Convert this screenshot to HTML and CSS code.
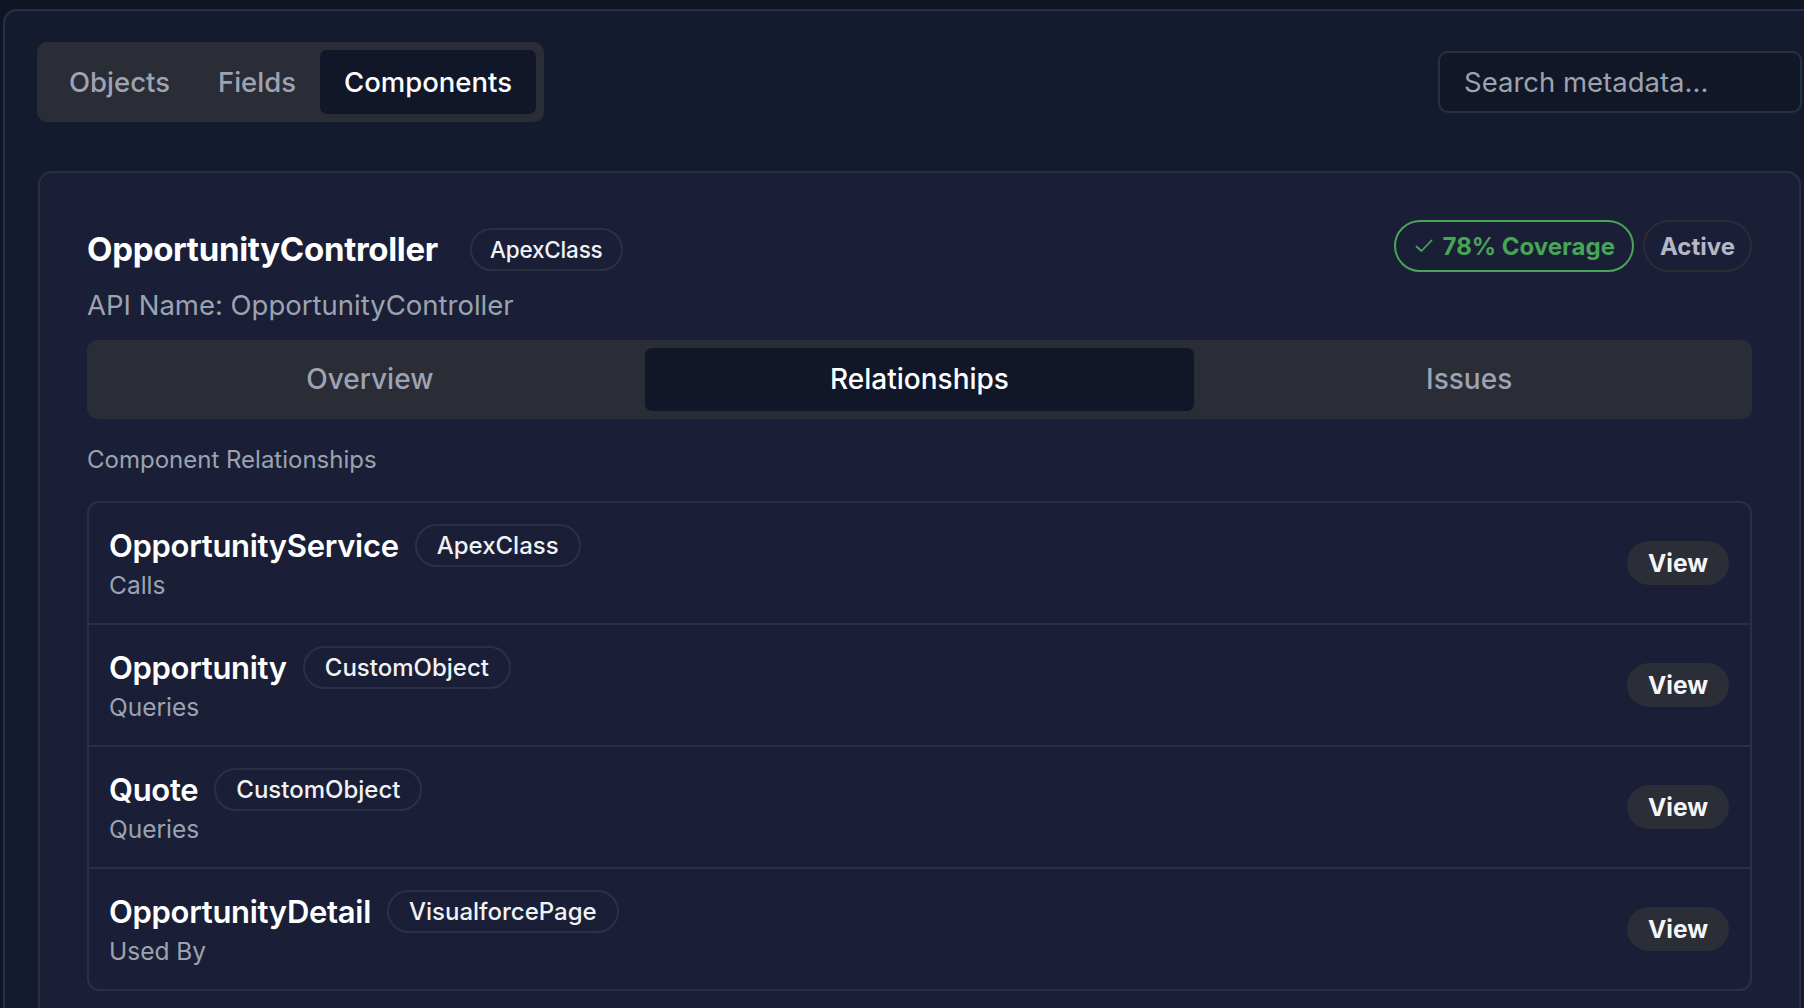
FILE: index.html
```html
<!DOCTYPE html>
<html lang="en">
<head>
<meta charset="utf-8">
<title>Metadata Explorer</title>
<link rel="stylesheet" href="styles.css">
</head>
<body>
<div class="frame">
  <div class="topbar">
    <nav class="seg">
      <div class="seg-tab">Objects</div>
      <div class="seg-tab">Fields</div>
      <div class="seg-tab is-active">Components</div>
    </nav>
    <input class="search" type="text" placeholder="Search metadata...">
  </div>

  <section class="card">
    <div class="head">
      <div class="head-left">
        <div class="title-row">
          <h1 class="title">OpportunityController</h1>
          <span class="badge badge-sm">ApexClass</span>
        </div>
        <div class="api">API Name: OpportunityController</div>
      </div>
      <div class="status">
        <span class="coverage">
          <svg class="check" width="18" height="14" viewBox="0 0 18 14"><polyline points="1.5,7.5 6.5,12 16.5,1.5" fill="none" stroke="currentColor" stroke-width="1.8" stroke-linecap="round" stroke-linejoin="round"/></svg>
          78% Coverage
        </span>
        <span class="state">Active</span>
      </div>
    </div>

    <div class="tabs">
      <div class="tab">Overview</div>
      <div class="tab is-active">Relationships</div>
      <div class="tab">Issues</div>
    </div>

    <div class="section-label">Component Relationships</div>

    <div class="list">
      <div class="row">
        <div class="row-main">
          <div class="row-head"><span class="row-title">OpportunityService</span><span class="badge">ApexClass</span></div>
          <div class="row-sub">Calls</div>
        </div>
        <button class="view">View</button>
      </div>
      <div class="row">
        <div class="row-main">
          <div class="row-head"><span class="row-title">Opportunity</span><span class="badge">CustomObject</span></div>
          <div class="row-sub">Queries</div>
        </div>
        <button class="view">View</button>
      </div>
      <div class="row">
        <div class="row-main">
          <div class="row-head"><span class="row-title">Quote</span><span class="badge">CustomObject</span></div>
          <div class="row-sub">Queries</div>
        </div>
        <button class="view">View</button>
      </div>
      <div class="row">
        <div class="row-main">
          <div class="row-head"><span class="row-title">OpportunityDetail</span><span class="badge">VisualforcePage</span></div>
          <div class="row-sub">Used By</div>
        </div>
        <button class="view">View</button>
      </div>
    </div>
  </section>
</div>
</body>
</html>
```

FILE: styles.css
```css
* { box-sizing: border-box; }

html, body {
  margin: 0;
  padding: 0;
  background: #101524;
  overflow: hidden;
  height: 100%;
}

body {
  font-family: Inter, "Noto Sans", "Liberation Sans", sans-serif;
  color: #f5f6f8;
}

.frame {
  margin: 9px 0 0 3px;
  width: 1834px;
  min-height: 1200px;
  background: #151b2f;
  border: 2px solid #283045;
  border-radius: 14px;
  padding: 31px 32px;
}

.topbar {
  display: flex;
  justify-content: space-between;
  align-items: center;
  height: 80px;
  width: 1765px;
}

.seg {
  display: flex;
  background: #2a2d36;
  border-radius: 10px;
  padding: 8px;
  height: 80px;
}

.seg-tab {
  height: 64px;
  line-height: 64px;
  padding: 0 24px;
  font-size: 27.5px;
  font-weight: 500;
  color: #9ea3b4;
  border-radius: 7px;
}

.seg-tab.is-active {
  background: #111728;
  color: #ffffff;
}

.search {
  width: 364px;
  height: 62px;
  border: 2px solid #283044;
  border-radius: 10px;
  background: #111727;
  padding: 0 24px;
  font-family: inherit;
  font-size: 27.5px;
  color: #e5e7eb;
  outline: none;
}

.search::placeholder { color: #9ca3af; }

.card {
  width: 1763px;
  margin: 49px 1px 0;
  background: #1a1f37;
  border: 2px solid #292f44;
  border-radius: 14px;
  padding: 47px;
}

.head {
  display: flex;
  justify-content: space-between;
  align-items: flex-start;
}

.title-row {
  display: flex;
  align-items: center;
  gap: 32px;
  height: 52px;
  margin-top: 3px;
}

.title {
  margin: 0;
  font-size: 33px;
  font-weight: 700;
  line-height: 1;
  color: #ffffff;
  letter-spacing: -0.3px;
}

.badge {
  display: inline-flex;
  align-items: center;
  height: 43px;
  padding: 0 20px;
  border: 2px solid #2b3145;
  border-radius: 999px;
  font-size: 24px;
  font-weight: 500;
  color: #f1f2f5;
}

.badge-sm {
  font-size: 22.5px;
  padding: 0 18px;
  letter-spacing: -0.2px;
}

.api {
  margin-top: 11px;
  font-size: 27.5px;
  line-height: 38px;
  color: #9ca3af;
}

.status {
  display: flex;
  gap: 9px;
}

.coverage,
.state {
  display: inline-flex;
  align-items: center;
  height: 52px;
  border-radius: 999px;
  font-size: 24px;
  font-weight: 700;
}

.coverage {
  gap: 10px;
  padding: 0 17px 0 19px;
  border: 2px solid #47a556;
  color: #47a556;
}

.state {
  padding: 0 15px;
  border: 2px solid #2a2d35;
  color: #b4b8c6;
}

.tabs {
  margin-top: 16px;
  display: grid;
  grid-template-columns: repeat(3, 1fr);
  background: #2a2d36;
  border-radius: 10px;
  padding: 8px;
}

.tab {
  height: 63px;
  line-height: 63px;
  text-align: center;
  font-size: 28px;
  font-weight: 500;
  color: #9ea3b4;
  border-radius: 7px;
}

.tab.is-active {
  background: #111728;
  color: #ffffff;
}

.section-label {
  margin-top: 23px;
  font-size: 24px;
  line-height: 35px;
  color: #9ca3af;
}

.list {
  margin-top: 24px;
  border: 2px solid #2a3045;
  border-radius: 12px;
}

.row {
  display: flex;
  align-items: center;
  justify-content: space-between;
  padding: 21px 21px 21px 20px;
}

.row + .row {
  border-top: 2px solid #2a3045;
}

.row-head {
  display: flex;
  align-items: center;
  gap: 16px;
  height: 43px;
}

.row-title {
  font-size: 31px;
  font-weight: 600;
  color: #ffffff;
  letter-spacing: -0.3px;
}

.row-sub {
  margin-top: 2px;
  font-size: 24.5px;
  line-height: 33px;
  color: #9ca3af;
}

.view {
  height: 44px;
  padding: 0 21px;
  border: none;
  border-radius: 999px;
  background: #2b2e36;
  font-family: inherit;
  font-size: 24.5px;
  font-weight: 700;
  color: #f5f5f7;
}
```
